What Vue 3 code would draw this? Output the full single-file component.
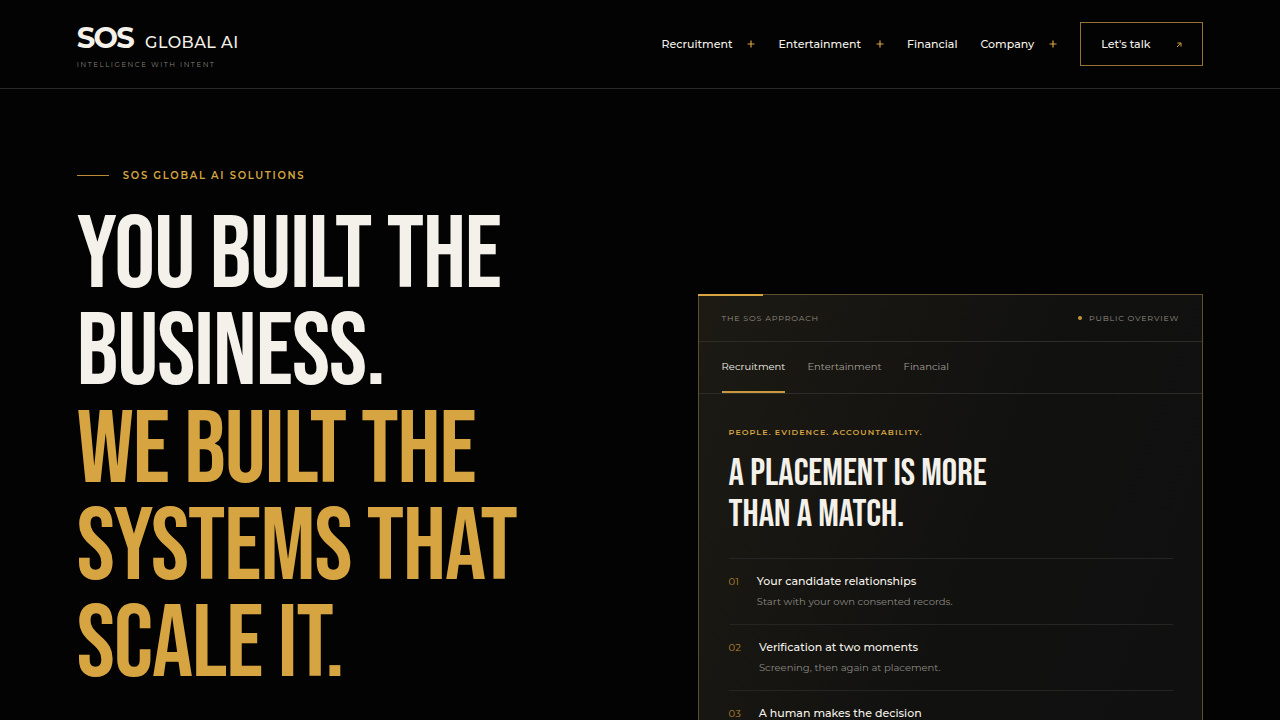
<script setup>
import { ref } from 'vue'

const navItems = [
  { label: 'Recruitment', menu: true },
  { label: 'Entertainment', menu: true },
  { label: 'Financial', menu: false },
  { label: 'Company', menu: true },
]
const tabs = ['Recruitment', 'Entertainment', 'Financial']
const activeTab = ref('Recruitment')
const steps = [
  { no: '01', title: 'Your candidate relationships', text: 'Start with your own consented records.' },
  { no: '02', title: 'Verification at two moments', text: 'Screening, then again at placement.' },
  { no: '03', title: 'A human makes the decision', text: '' },
]
</script>

<template>
  <div class="page">
    <header class="site-header">
      <a class="brand" href="#">
        <span class="brand-name"><strong>SOS</strong><span class="brand-sub">GLOBAL AI</span></span>
        <span class="brand-tag">INTELLIGENCE WITH INTENT</span>
      </a>
      <nav class="nav" aria-label="Main">
        <template v-for="item in navItems" :key="item.label">
          <button v-if="item.menu" type="button" class="nav-item">
            {{ item.label }}
            <svg class="plus" viewBox="0 0 8 8" aria-hidden="true"><path d="M4 0.5V7.5M0.5 4H7.5" /></svg>
          </button>
          <a v-else class="nav-item" href="#">{{ item.label }}</a>
        </template>
        <a class="cta" href="#">
          Let's talk
          <svg class="arrow" viewBox="0 0 6 8" aria-hidden="true"><path d="M1 7L4.8 3.2M1.4 3H5V6.6" /></svg>
        </a>
      </nav>
    </header>

    <main class="hero">
      <section class="intro">
        <p class="eyebrow">SOS GLOBAL AI SOLUTIONS</p>
        <h1>
          <span>YOU BUILT THE</span>
          <span>BUSINESS.</span>
          <span class="gold">WE BUILT THE</span>
          <span class="gold">SYSTEMS THAT</span>
          <span class="gold">SCALE IT.</span>
        </h1>
      </section>

      <section class="panel">
        <div class="panel-head">
          <span>THE SOS APPROACH</span>
          <span class="status">PUBLIC OVERVIEW</span>
        </div>
        <div class="tabs" role="tablist">
          <button
            v-for="tab in tabs"
            :key="tab"
            type="button"
            role="tab"
            class="tab"
            :class="{ active: tab === activeTab }"
            :aria-selected="tab === activeTab"
            @click="activeTab = tab"
          >{{ tab }}</button>
        </div>
        <div class="panel-body">
          <p class="kicker">PEOPLE. EVIDENCE. ACCOUNTABILITY.</p>
          <h2><span>A PLACEMENT IS MORE</span><span>THAN A MATCH.</span></h2>
          <ol class="steps">
            <li v-for="step in steps" :key="step.no">
              <span class="no">{{ step.no }}</span>
              <div>
                <h3>{{ step.title }}</h3>
                <p v-if="step.text">{{ step.text }}</p>
              </div>
            </li>
          </ol>
        </div>
      </section>
    </main>
  </div>
</template>

<style>
body {
  background: #030303;
}
</style>

<style scoped>
.page {
  --gold: #d6a541;
  --cream: #f4f1ea;
  --display: "Bebas Neue", "Liberation Sans Narrow", "DejaVu Sans Condensed", sans-serif;
  height: 100vh;
  overflow: hidden;
  background: #030303;
  color: var(--cream);
  font-family: Montserrat, Inter, sans-serif;
}
h1, h2, h3, p, ol {
  margin: 0;
  padding: 0;
}
a {
  color: inherit;
  text-decoration: none;
}
button {
  padding: 0;
  border: 0;
  background: none;
  color: inherit;
  font: inherit;
  cursor: pointer;
}
.site-header {
  display: flex;
  align-items: center;
  justify-content: space-between;
  height: 88px;
  padding: 0 6%;
  border-bottom: 1px solid #2a2a29;
}
.brand {
  display: flex;
  flex-direction: column;
  gap: 2px;
  padding-top: 2px;
}
.brand-name {
  display: flex;
  align-items: baseline;
  gap: 12px;
  line-height: 32px;
}
.brand-name strong {
  font-size: 29px;
  font-weight: 700;
  letter-spacing: -0.06em;
}
.brand-sub {
  font-size: 16px;
  font-weight: 500;
  letter-spacing: 0.03em;
}
.brand-tag {
  color: #858176;
  font-size: 7px;
  line-height: 8px;
  letter-spacing: 0.22em;
}
.nav {
  display: flex;
  align-items: center;
  gap: 23px;
  font-size: 11px;
  line-height: 16px;
  font-weight: 500;
}
.nav-item {
  display: flex;
  align-items: center;
  gap: 15px;
}
.plus {
  width: 8px;
  height: 8px;
  fill: none;
  stroke: var(--gold);
  stroke-width: 1.2;
}
.cta {
  display: flex;
  align-items: center;
  justify-content: space-between;
  box-sizing: border-box;
  width: 123px;
  height: 44px;
  padding: 0 20px;
  border: 1px solid #947333;
}
.arrow {
  width: 6px;
  height: 8px;
  fill: none;
  stroke: var(--gold);
}
.hero {
  display: grid;
  grid-template-columns: minmax(0, 21fr) minmax(0, 19fr);
  gap: 62px;
  align-items: start;
  padding: 78px 6% 0;
}
.eyebrow {
  display: flex;
  align-items: center;
  gap: 14px;
  color: var(--gold);
  font-size: 10px;
  font-weight: 600;
  line-height: 17px;
  letter-spacing: 0.17em;
}
.eyebrow::before {
  content: "";
  width: 32px;
  height: 1px;
  background: #b98b37;
}
h1 {
  margin-top: 24px;
  font-family: var(--display);
  font-size: 8vw;
  font-weight: 400;
  line-height: 0.95;
  letter-spacing: -0.01em;
  white-space: nowrap;
}
h1 span, h2 span {
  display: block;
}
.gold {
  color: var(--gold);
}
.panel {
  position: relative;
  margin-top: 127px;
  border: 1px solid #5f4d2f;
  background: linear-gradient(110deg, #1c1a13 0%, #111110 55%, #101010 100%);
}
.panel::before {
  content: "";
  position: absolute;
  top: -1px;
  left: -1px;
  width: 13%;
  height: 2px;
  background: var(--gold);
}
.panel-head {
  display: flex;
  align-items: center;
  justify-content: space-between;
  height: 46px;
  padding: 0 23px;
  border-bottom: 1px solid #2d2c29;
  color: #918d81;
  font-size: 8px;
  letter-spacing: 0.1em;
}
.status {
  display: flex;
  align-items: center;
  gap: 7px;
}
.status::before {
  content: "";
  width: 4px;
  height: 4px;
  border-radius: 50%;
  background: #c8963a;
}
.tabs {
  display: flex;
  gap: 22px;
  height: 51px;
  padding: 0 23px;
  border-bottom: 1px solid #2d2c29;
}
.tab {
  border-bottom: 2px solid transparent;
  color: #a19e96;
  font-size: 10px;
}
.tab.active {
  border-bottom-color: #c8983c;
  color: var(--cream);
}
.panel-body {
  padding: 31px 29px 40px 30px;
}
.kicker {
  color: var(--gold);
  font-size: 8px;
  font-weight: 600;
  line-height: 14px;
  letter-spacing: 0.13em;
}
h2 {
  margin-top: 14px;
  font-family: var(--display);
  font-size: 3vw;
  font-weight: 400;
  line-height: 41px;
  white-space: nowrap;
}
.steps {
  margin-top: 23px;
  list-style: none;
}
.steps li {
  display: flex;
  gap: 18px;
  padding: 14px 0;
  border-top: 1px solid #252523;
}
.no {
  color: #b4852f;
  font-size: 10px;
  line-height: 17px;
}
h3 {
  font-size: 11px;
  font-weight: 500;
  line-height: 16px;
}
.steps p {
  margin-top: 5px;
  color: #8b8982;
  font-size: 10px;
  line-height: 16px;
}
</style>
